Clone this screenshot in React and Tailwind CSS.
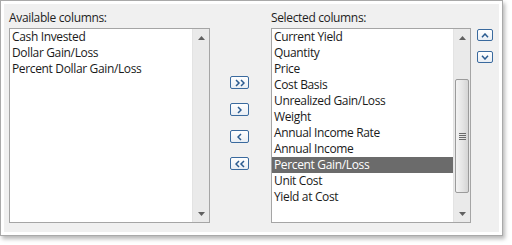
import React from "react";

const font = { fontFamily: '"Open Sans", "Noto Sans", sans-serif' };

function TriUp() {
  return (
    <svg width="7" height="4" viewBox="0 0 7 4"><path d="M0 4 L3.5 0 L7 4 Z" fill="#606060" /></svg>
  );
}
function TriDown() {
  return (
    <svg width="7" height="4" viewBox="0 0 7 4"><path d="M0 0 L3.5 4 L7 0 Z" fill="#606060" /></svg>
  );
}

function ScrollBar({ thumb }) {
  return (
    <div className="w-[17px] h-full flex flex-col bg-[#eaeaea] border-l border-[#e3e3e3]">
      <div className="h-[17px] flex items-center justify-center shrink-0">
        <TriUp />
      </div>
      <div className="flex-1 flex flex-col px-[1px]">
        {thumb ? (
          <>
            <div className="h-[33px]" />
            <div className="h-[114px] rounded-[2px] border border-[#9b9b9b] bg-gradient-to-r from-[#f3f3f3] via-[#e6e6e6] to-[#d5d5d5] flex items-center justify-center">
              <svg width="7" height="7" viewBox="0 0 7 7">
                <path d="M0 0.5 H7 M0 2.5 H7 M0 4.5 H7 M0 6.5 H7" stroke="#6a6a6a" strokeWidth="1" />
              </svg>
            </div>
          </>
        ) : null}
      </div>
      <div className="h-[17px] flex items-center justify-center shrink-0">
        <TriDown />
      </div>
    </div>
  );
}

function ListBox({ items, selected, thumb, width }) {
  return (
    <div className={`${width} h-[195px] border border-[#a5a5a5] bg-white flex`}>
      <div className="flex-1 flex flex-col">
        {items.map((it) => (
          <div
            key={it}
            className={`h-[16px] leading-[16px] pl-[2px] text-[12px] tracking-[-0.35px] whitespace-nowrap ${
              it === selected ? "bg-[#6b6b6b] text-white" : "text-[#1a1a1a]"
            }`}
          >
            {it}
          </div>
        ))}
      </div>
      <ScrollBar thumb={thumb} />
    </div>
  );
}

function Chev({ dir, double }) {
  const single = dir === "right" ? "M1 1 L4 4 L1 7" : "M4 1 L1 4 L4 7";
  return (
    <svg width={double ? 10 : 5} height="8" viewBox={double ? "0 0 10 8" : "0 0 5 8"}>
      <path d={single} fill="none" stroke="#2a5b90" strokeWidth="1.5" />
      {double ? (
        <path d={single} transform="translate(5 0)" fill="none" stroke="#2a5b90" strokeWidth="1.5" />
      ) : null}
    </svg>
  );
}

function MoveBtn({ children, w = "w-[19px]", h = "h-[13px]" }) {
  return (
    <div className={`${w} ${h} rounded-[2px] border border-[#3a6a9e] bg-gradient-to-b from-white to-[#e9eef4] flex items-center justify-center`}>
      {children}
    </div>
  );
}

function VChev({ up }) {
  return (
    <svg width="8" height="5" viewBox="0 0 8 5">
      <path d={up ? "M1 4.2 L4 1 L7 4.2" : "M1 0.8 L4 4 L7 0.8"} fill="none" stroke="#2a5b90" strokeWidth="1.5" />
    </svg>
  );
}

export default function App() {
  const available = ["Cash Invested", "Dollar Gain/Loss", "Percent Dollar Gain/Loss"];
  const selectedCols = [
    "Current Yield",
    "Quantity",
    "Price",
    "Cost Basis",
    "Unrealized Gain/Loss",
    "Weight",
    "Annual Income Rate",
    "Annual Income",
    "Percent Gain/Loss",
    "Unit Cost",
    "Yield at Cost",
  ];
  return (
    <div className="w-[512px] h-[245px] bg-white" style={font}>
      <div className="w-[503px] h-[236px] border border-[#a9a9a9] bg-white p-[3px] shadow-[2px_3px_4px_rgba(0,0,0,0.28)]">
        <div className="w-full h-full bg-[#f0f0f0] flex pl-[5px] pt-[6px]">
          <div className="flex flex-col">
            <div className="h-[16px] leading-[16px] text-[12px] tracking-[-0.35px] text-[#1e1e1e] mb-[2px]">Available columns:</div>
            <ListBox items={available} width="w-[201px]" />
          </div>
          <div className="ml-[20px] pt-[66px] flex flex-col gap-[14px]">
            <MoveBtn><Chev dir="right" double /></MoveBtn>
            <MoveBtn><Chev dir="right" /></MoveBtn>
            <MoveBtn><Chev dir="left" /></MoveBtn>
            <MoveBtn><Chev dir="left" double /></MoveBtn>
          </div>
          <div className="ml-[22px] flex flex-col">
            <div className="h-[16px] leading-[16px] text-[12px] tracking-[-0.35px] text-[#1e1e1e] mb-[2px]">Selected columns:</div>
            <ListBox items={selectedCols} selected="Percent Gain/Loss" thumb width="w-[200px]" />
          </div>
          <div className="ml-[6px] pt-[19px] flex flex-col gap-[10px]">
            <MoveBtn w="w-[16px]" h="h-[12px]"><VChev up /></MoveBtn>
            <MoveBtn w="w-[16px]" h="h-[12px]"><VChev /></MoveBtn>
          </div>
        </div>
      </div>
    </div>
  );
}
